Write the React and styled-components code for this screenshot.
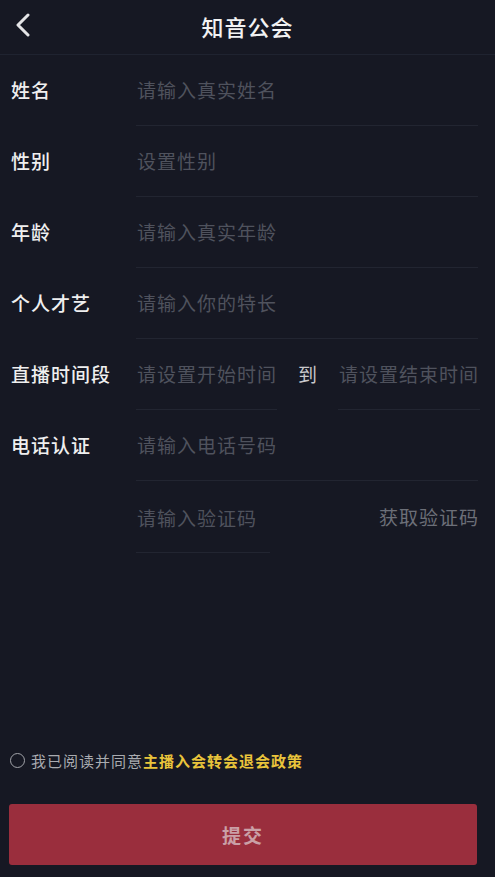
import styled, { createGlobalStyle } from "styled-components";

const GlobalStyle = createGlobalStyle`
  * { box-sizing: border-box; }
  html, body {
    margin: 0;
    padding: 0;
    background: #161823;
  }
  body {
    font-family: "Noto Sans CJK SC", "Noto Sans", sans-serif;
  }
`;

const rows = [
  { label: "姓名", placeholder: "请输入真实姓名" },
  { label: "性别", placeholder: "设置性别" },
  { label: "年龄", placeholder: "请输入真实年龄" },
  { label: "个人才艺", placeholder: "请输入你的特长" },
];

const App = () => {
  return (
    <Page>
      <GlobalStyle />
      <Header>
        <BackButton aria-label="返回">
          <svg width="16" height="24" viewBox="0 0 16 24" fill="none">
            <path
              d="M13 2 L3 12 L13 22"
              stroke="#e4e4e6"
              strokeWidth="3"
              strokeLinecap="round"
              strokeLinejoin="round"
            />
          </svg>
        </BackButton>
        <Title>知音公会</Title>
      </Header>

      <Form>
        {rows.map((row) => (
          <Row key={row.label}>
            <Label>{row.label}</Label>
            <Field>
              <Placeholder>{row.placeholder}</Placeholder>
            </Field>
          </Row>
        ))}

        <Row>
          <Label>直播时间段</Label>
          <TimeField>
            <Placeholder>请设置开始时间</Placeholder>
          </TimeField>
          <To>到</To>
          <TimeField $end>
            <Placeholder>请设置结束时间</Placeholder>
          </TimeField>
        </Row>

        <Row>
          <Label>电话认证</Label>
          <Field>
            <Placeholder>请输入电话号码</Placeholder>
          </Field>
        </Row>

        <Row $tall>
          <Label />
          <CodeField>
            <Placeholder>请输入验证码</Placeholder>
          </CodeField>
          <GetCode>获取验证码</GetCode>
        </Row>
      </Form>

      <Footer>
        <Agreement>
          <Radio />
          <span>我已阅读并同意</span>
          <Policy>主播入会转会退会政策</Policy>
        </Agreement>
        <Submit>提交</Submit>
      </Footer>
    </Page>
  );
};

export default App;

const Page = styled.div`
  height: 100vh;
  display: flex;
  flex-direction: column;
  background: #161823;
`;

const Header = styled.header`
  position: relative;
  height: 55px;
  flex-shrink: 0;
  display: flex;
  align-items: center;
  justify-content: center;
  border-bottom: 1px solid #1f2330;
`;

const BackButton = styled.button`
  position: absolute;
  left: 15px;
  top: 13px;
  padding: 0;
  border: none;
  background: none;
  display: flex;
`;

const Title = styled.h1`
  margin: 0 0 3px;
  font-size: 22px;
  font-weight: 500;
  letter-spacing: 1px;
  color: #f2f2f2;
`;

const Form = styled.main`
  flex: 1;
`;

const Row = styled.div`
  display: flex;
  align-items: stretch;
  height: ${(p) => (p.$tall ? "72px" : "71px")};
  padding-right: 17px;
`;

const Label = styled.div`
  width: 136px;
  flex-shrink: 0;
  padding-left: 11px;
  display: flex;
  align-items: center;
  padding-bottom: 3px;
  font-size: 19px;
  letter-spacing: 1px;
  font-weight: 500;
  color: #efefef;
`;

const Field = styled.div`
  flex: 1;
  display: flex;
  align-items: center;
  padding-bottom: 2px;
  border-bottom: 1px solid #222531;
`;

const TimeField = styled(Field)`
  flex: none;
  width: ${(p) => (p.$end ? "142px" : "141px")};
  margin-right: ${(p) => (p.$end ? "-2px" : "0")};
`;

const CodeField = styled(Field)`
  flex: none;
  width: 134px;
  padding-bottom: 0;
  padding-top: 2px;
`;

const Placeholder = styled.span`
  font-size: 19px;
  letter-spacing: 1px;
  color: #4f525d;
  white-space: nowrap;
  margin-left: 1px;
`;

const To = styled.div`
  width: 62px;
  display: flex;
  align-items: center;
  justify-content: center;
  padding-bottom: 2px;
  font-size: 19px;
  color: #c9c9cc;
`;

const GetCode = styled.div`
  flex: 1;
  display: flex;
  align-items: center;
  justify-content: flex-end;
  padding-bottom: 2px;
  font-size: 19px;
  letter-spacing: 1px;
  color: #6c6f78;
  margin-right: -1px;
`;

const Footer = styled.footer`
  padding: 0 18px 12px 9px;
  display: flex;
  flex-direction: column;
  gap: 34px;
`;

const Agreement = styled.div`
  display: flex;
  align-items: center;
  height: 20px;
  font-size: 15px;
  letter-spacing: 1px;
  color: #a9abb0;
  white-space: nowrap;
`;

const Radio = styled.span`
  width: 15px;
  height: 15px;
  border: 1.5px solid #a2a4aa;
  border-radius: 50%;
  margin-left: 1px;
  margin-right: 6px;
  flex-shrink: 0;
`;

const Policy = styled.span`
  color: #e9c43b;
  font-weight: 700;
`;

const Submit = styled.button`
  height: 61px;
  border: none;
  border-radius: 3px;
  background: #9a2e3d;
  color: #caa0a7;
  font-family: inherit;
  font-size: 19px;
  font-weight: 700;
  letter-spacing: 2px;
`;
